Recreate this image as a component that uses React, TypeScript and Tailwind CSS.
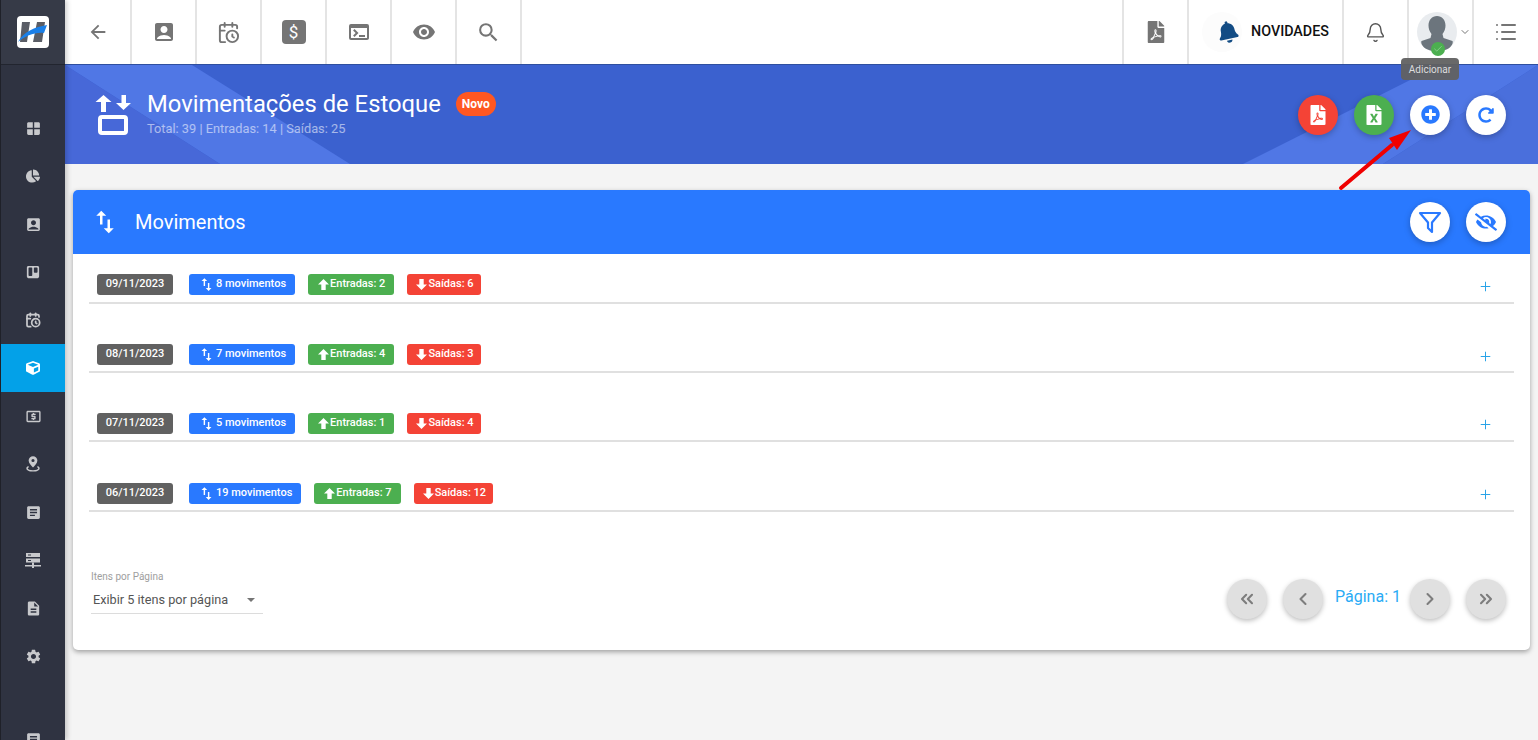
import { ChevronDown, ChevronLeft, ChevronRight, ChevronsLeft, ChevronsRight, Bell, CalendarClock, List, Plus, Check } from 'lucide-react';
import {
  FaBell,
  FaChartPie,
  FaCube,
  FaEyeSlash,
  FaFileExcel,
  FaFilePdf,
  FaPlusCircle,
  FaRedoAlt,
  FaTrello,
} from 'react-icons/fa';
import {
  MdAccountBox,
  MdArrowBack,
  MdArticle,
  MdDescription,
  MdLocalAtm,
  MdSearch,
  MdSettings,
  MdSwapVert,
  MdTerminal,
  MdVisibility,
  MdWindow,
} from 'react-icons/md';

const PinIcon = () => (
  <svg viewBox="0 0 16 18" className="h-4 w-[14px]" fill="currentColor">
    <path fillRule="evenodd" d="M8 0a5 5 0 0 1 5 5c0 3-3 6-5 8-2-2-5-5-5-8a5 5 0 0 1 5-5Zm0 3.2a1.8 1.8 0 1 0 0 3.6 1.8 1.8 0 0 0 0-3.6Z" />
    <path d="M2.6 11.4C1.2 12 .4 12.9.4 14c0 2.2 3.4 3.6 7.6 3.6s7.6-1.4 7.6-3.6c0-1.100-.8-2-2.200-2.600l-.8 1.300c.9.400 1.400.900 1.400 1.300 0 .900-2.400 2-6 2s-6-1.100-6-2c0-.400.500-.900 1.400-1.300Z" />
  </svg>
);

const ServerIcon = () => (
  <svg viewBox="0 0 16 16" className="h-4 w-4" fill="currentColor">
    <path fillRule="evenodd" d="M1 1h14v4H1Zm2 1.500v1h3v-1ZM1 6.500h14v4H1Zm2 1.500v1h3V8Z" />
    <path d="M7 10.500h2V13h7v1.500H9V16H7v-1.500H0V13h7Z" />
  </svg>
);

const ArrowUp = () => (
  <svg viewBox="0 0 11 11" className="h-[11px] w-[11px]" fill="currentColor">
    <path d="M5.500 0 11 5.600H7.700V11H3.300V5.600H0Z" />
  </svg>
);

const ArrowDown = () => (
  <svg viewBox="0 0 11 11" className="h-[11px] w-[11px]" fill="currentColor">
    <path d="M5.500 11 0 5.400h3.300V0h4.400v5.400H11Z" />
  </svg>
);

const sideItems = [
  { icon: <MdWindow size={17} /> },
  { icon: <FaChartPie size={14} /> },
  { icon: <MdAccountBox size={17} /> },
  { icon: <FaTrello size={14} /> },
  { icon: <CalendarClock size={16} strokeWidth={2.6} /> },
  { icon: <FaCube size={14} />, active: true },
  { icon: <MdLocalAtm size={17} /> },
  { icon: <PinIcon /> },
  { icon: <MdArticle size={17} /> },
  { icon: <ServerIcon /> },
  { icon: <MdDescription size={17} /> },
  { icon: <MdSettings size={17} /> },
];

const days = [
  { date: '09/11/2023', moves: 8, inCount: 2, outCount: 6, height: 'h-[70px]', inner: 'h-[50px]', plus: 'mt-[5px]' },
  { date: '08/11/2023', moves: 7, inCount: 4, outCount: 3, height: 'h-[69px]', inner: 'h-[49px]', plus: 'mt-[5px]' },
  { date: '07/11/2023', moves: 5, inCount: 1, outCount: 4, height: 'h-[70px]', inner: 'h-[49px]', plus: 'mt-[4px]' },
  { date: '06/11/2023', moves: 19, inCount: 7, outCount: 12, height: 'h-[69px]', inner: 'h-[49px]', plus: 'mt-[4px]' },
];

const NavCell = ({ children, className = '' }: { children: React.ReactNode; className?: string }) => (
  <div className={`flex h-full items-center justify-center border-r-2 border-[#e4e4e4] ${className}`}>{children}</div>
);

const RoundButton = ({ children, className = 'bg-white' }: { children: React.ReactNode; className?: string }) => (
  <button className={`flex h-10 w-10 items-center justify-center rounded-full shadow-[0_2px_6px_rgba(0,0,0,0.25)] ${className}`}>
    {children}
  </button>
);

const PageButton = ({ children }: { children: React.ReactNode }) => (
  <button className="flex h-10 w-10 items-center justify-center rounded-full bg-[#e0e0e0] text-[#7d7d7d] shadow-[0_2px_5px_rgba(0,0,0,0.25)]">
    {children}
  </button>
);

const Pill = ({ className, children }: { className: string; children: React.ReactNode }) => (
  <span className={`flex h-[21px] items-center justify-center rounded-[3px] text-[11px] font-medium text-white ${className}`}>
    {children}
  </span>
);

const DayRow = ({ day }: { day: (typeof days)[number] }) => (
  <div className={`mx-4 ${day.height}`}>
    <div className={`flex items-start border-b-2 border-[#e0e0e0] pt-5 pl-2 ${day.inner}`}>
      <Pill className="w-[76px] bg-[#616161]">{day.date}</Pill>
      <Pill className="ml-4 gap-px bg-[#2979ff] pr-[9px] pl-[9px]">
        <MdSwapVert size={17} />
        {day.moves} movimentos
      </Pill>
      <Pill className="ml-[13px] gap-px bg-[#4caf50] pr-[9px] pl-[10px]">
        <ArrowUp />
        Entradas: {day.inCount}
      </Pill>
      <Pill className="ml-[13px] gap-px bg-[#f44336] pr-[7px] pl-[9px]">
        <ArrowDown />
        Saídas: {day.outCount}
      </Pill>
      <Plus size={15} strokeWidth={1.6} className={`mr-[21px] ml-auto text-[#29a3e8] ${day.plus}`} />
    </div>
  </div>
);

export default function App() {
  return (
    <div className="relative flex h-[740px] w-[1538px] overflow-hidden bg-[#f4f4f4] font-['Roboto',sans-serif]">
      <aside className="z-20 flex w-[65px] shrink-0 flex-col border-l border-[#1f2129] bg-[#2f3341] shadow-[2px_0_5px_rgba(0,0,0,0.2)]">
        <div className="flex h-[65px] shrink-0 items-center justify-center border-b border-[#22252f] bg-[#363a47]">
          <div className="h-8 w-8 overflow-hidden rounded-[4px] bg-white">
            <svg viewBox="0 0 32 32" className="h-8 w-8">
              <path d="M5 6h8l-3 20H3ZM20 6h8l-3 20h-9Z" fill="#5a5d66" />
              <path d="M1 26C6 16 18 11 30 9l-3 8C18 16 8 20 1 26Z" fill="#1a7fe8" />
            </svg>
          </div>
        </div>
        <div className="mx-auto mt-[23px] h-px w-4 bg-[#4d5160]" />
        <nav className="mt-4 flex flex-col">
          {sideItems.map((item, i) => (
            <div
              key={i}
              className={`flex h-12 items-center justify-center ${item.active ? 'bg-[#03a1e8] text-white' : 'text-[#c8c9cc]'}`}
            >
              {item.icon}
            </div>
          ))}
        </nav>
        <div className="mx-auto mt-[22px] h-px w-4 bg-[#4d5160]" />
        <div className="mt-[29px] flex justify-center text-[#c8c9cc]">
          <MdArticle size={17} />
        </div>
      </aside>

      <main className="flex min-w-0 flex-1 flex-col">
        <header className="z-10 flex h-[65px] shrink-0 items-center border-b border-[#2f4f9f] bg-white text-[#757575]">
          <NavCell className="w-[67px]">
            <MdArrowBack size={22} />
          </NavCell>
          <NavCell className="w-[65px]">
            <MdAccountBox size={24} />
          </NavCell>
          <NavCell className="w-[65px]">
            <CalendarClock size={23} strokeWidth={2} />
          </NavCell>
          <NavCell className="w-[65px]">
            <span className="flex h-6 w-6 items-center justify-center rounded-[4px] bg-[#757575] text-[17px] leading-none text-white">$</span>
          </NavCell>
          <NavCell className="w-[65px]">
            <MdTerminal size={24} />
          </NavCell>
          <NavCell className="w-[65px]">
            <MdVisibility size={24} />
          </NavCell>
          <NavCell className="w-[65px]">
            <MdSearch size={25} />
          </NavCell>
          <div className="flex-1 self-stretch border-r-2 border-[#e4e4e4]" />
          <NavCell className="w-[65px]">
            <FaFilePdf size={22} />
          </NavCell>
          <NavCell className="w-[155px] gap-[9px]">
            <span className="flex h-10 w-10 items-center justify-center rounded-full bg-[#fcfcfc] text-[#134c84]">
              <FaBell size={22} className="translate-x-[6px] -rotate-12" />
            </span>
            <span className="text-[14.3px] font-medium text-[#111]">NOVIDADES</span>
          </NavCell>
          <NavCell className="w-[65px]">
            <Bell size={21} strokeWidth={1.6} className="text-[#555]" />
          </NavCell>
          <NavCell className="relative w-[65px] justify-start pl-2">
            <span className="relative block h-10 w-10 rounded-full bg-[#e9ecef]">
              <svg viewBox="0 0 40 40" className="h-10 w-10 text-[#6c757d]">
                <path
                  fill="currentColor"
                  d="M20 4c5 0 8.500 4 8.500 9.500 0 3-1 6-3 8.500l1 4 9 3c1 2-1 6-5 8-6 3-15 3-21 0-4-2-6-6-5-8l9-3 1-4c-2-2.500-3-5.500-3-8.500C11.500 8 15 4 20 4Z"
                />
              </svg>
              <span className="absolute -bottom-[4px] left-[14px] flex h-[14px] w-[14px] items-center justify-center rounded-full bg-[#4caf50]">
                <Check size={10} strokeWidth={2} className="text-[#8fd493]" />
              </span>
            </span>
            <ChevronDown size={12} className="ml-[2px] text-[#757575]" />
          </NavCell>
          <div className="flex w-16 items-center justify-center">
            <List size={24} strokeWidth={2} />
          </div>
        </header>

        <section className="relative flex h-[99px] shrink-0 items-center justify-between overflow-hidden bg-[#3b61cf] pr-8 pl-[30px]">
          <div className="absolute inset-0 bg-[#5077e5] [clip-path:polygon(0_0,127px_0,285px_100%,155px_100%)]" />
          <div className="absolute inset-0 bg-[#4768d8] [clip-path:polygon(0_0,155px_100%,0_100%)]" />
          <div className="absolute inset-0 bg-[#5077e5] [clip-path:polygon(1178px_100%,1375px_0,1473px_0,1318px_100%)]" />
          <div className="absolute inset-0 bg-[#4a6fdc] [clip-path:polygon(1318px_100%,1473px_0,1473px_100%)]" />

          <div className="relative flex items-center">
            <svg viewBox="0 0 36 41" className="h-[41px] w-9 text-white" fill="currentColor">
              <path d="M8.500 1 16.500 8H11v10H6V8H.5ZM28.500 16 21 9h5.500V1h4.500v8H36Z" />
              <rect x="5" y="23" width="26" height="16" rx="2" fill="none" stroke="currentColor" strokeWidth="4" />
            </svg>
            <div className="ml-4">
              <div className="flex items-center">
                <h1 className="text-[23.8px] leading-6 text-white">Movimentações de Estoque</h1>
                <span className="ml-[15px] flex h-6 w-10 items-center justify-center rounded-full bg-[#ff5722] text-xs font-bold text-white">Novo</span>
              </div>
              <p className="mt-[5px] text-[12.8px] leading-4 text-white/55">Total: 39 | Entradas: 14 | Saídas: 25</p>
            </div>
          </div>

          <div className="relative flex gap-4">
            <RoundButton className="bg-[#f44336] text-white">
              <FaFilePdf size={20} />
            </RoundButton>
            <RoundButton className="bg-[#4caf50] text-white">
              <FaFileExcel size={20} />
            </RoundButton>
            <RoundButton className="bg-white text-[#2979ff]">
              <FaPlusCircle size={19} />
            </RoundButton>
            <RoundButton className="bg-white text-[#2979ff]">
              <FaRedoAlt size={16} />
            </RoundButton>
          </div>
        </section>

        <div className="px-2 pt-[26px]">
          <div className="h-[460px] rounded-[5px] bg-white shadow-[0_2px_5px_rgba(0,0,0,0.35)]">
            <div className="flex h-16 items-center rounded-t-[5px] bg-[#2979ff] pr-6 pl-[17px] text-white">
              <MdSwapVert size={30} />
              <h2 className="ml-[15px] text-xl">Movimentos</h2>
              <div className="ml-auto flex gap-4">
                <RoundButton className="bg-white text-[#2979ff]">
                  <svg viewBox="0 0 24 24" className="h-6 w-6" fill="none" stroke="currentColor" strokeWidth="2.2" strokeLinejoin="round">
                    <path d="M2 3h20l-8 9.500V22l-4-4v-5.500Z" />
                  </svg>
                </RoundButton>
                <RoundButton className="bg-white text-[#2979ff]">
                  <FaEyeSlash size={22} />
                </RoundButton>
              </div>
            </div>

            {days.map((day) => (
              <DayRow key={day.date} day={day} />
            ))}

            <div className="mt-[39px] flex items-start justify-between pr-6 pl-[18px]">
              <div className="w-[172px] border-b border-[#dcdcdc] pb-1">
                <p className="text-[10px] leading-3 text-[#9e9e9e]">Itens por Página</p>
                <div className="mt-[7px] flex h-[19px] items-center justify-between pr-[8px] pl-[2px] text-[12.7px] text-[#555]">
                  Exibir 5 itens por página
                  <span className="h-0 w-0 border-x-[4px] border-t-[4px] border-x-transparent border-t-[#757575]" />
                </div>
              </div>
              <div className="mt-2 flex items-center">
                <PageButton>
                  <ChevronsLeft size={20} strokeWidth={2.5} />
                </PageButton>
                <div className="ml-4">
                  <PageButton>
                    <ChevronLeft size={20} strokeWidth={2.5} />
                  </PageButton>
                </div>
                <span className="mr-[9px] ml-3 -translate-y-[2px] text-base text-[#29abf5]">Página: 1</span>
                <PageButton>
                  <ChevronRight size={20} strokeWidth={2.5} />
                </PageButton>
                <div className="ml-4">
                  <PageButton>
                    <ChevronsRight size={20} strokeWidth={2.5} />
                  </PageButton>
                </div>
              </div>
            </div>
          </div>
        </div>
      </main>

      <div className="absolute top-[58px] left-[1401px] z-30 flex h-[22px] w-[58px] items-center justify-center rounded-[4px] bg-[#616161]/95 text-[10px] text-[#ddd]">
        Adicionar
      </div>

      <svg className="pointer-events-none absolute top-[125px] left-[1335px] z-30 h-[70px] w-[80px]" viewBox="0 0 80 70">
        <path d="M6 63 57 20" stroke="#f00000" strokeWidth="4" strokeLinecap="round" />
        <path d="M76 5 54 13 62 25Z" fill="#f00000" />
      </svg>
    </div>
  );
}
